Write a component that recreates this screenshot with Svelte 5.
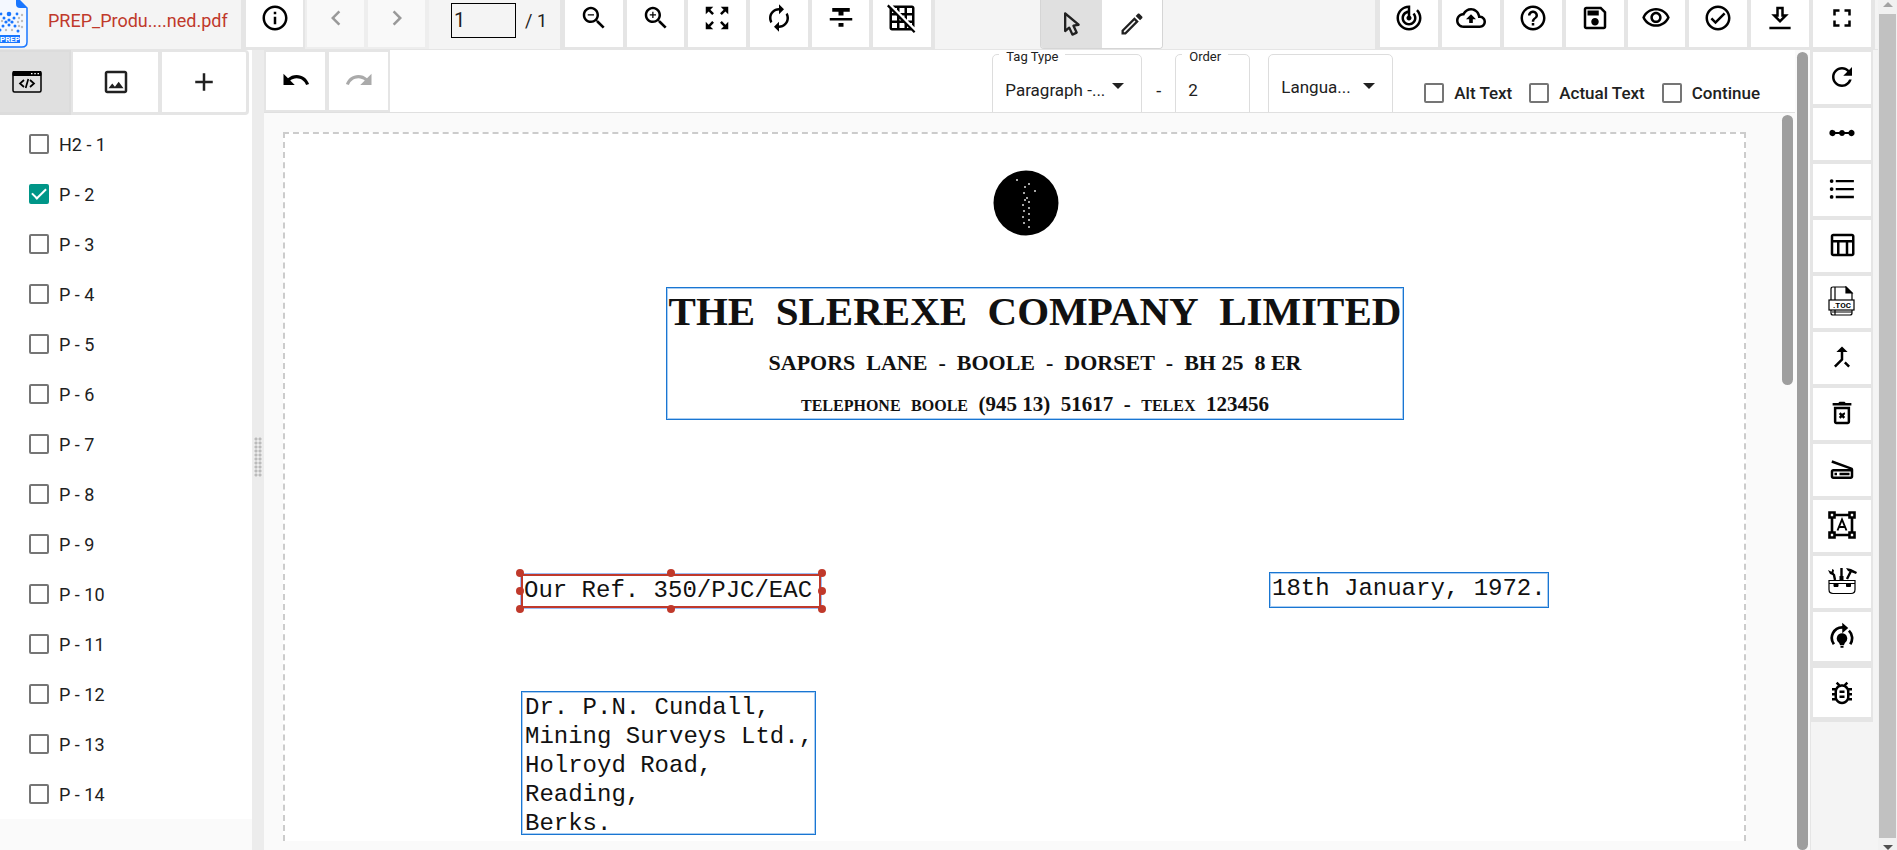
<script lang="ts">
  type Tool = { id: string; label: string; disabled?: boolean };

  const navTools: Tool[] = [
    { id: 'info', label: 'Document info' },
    { id: 'prev', label: 'Previous page', disabled: true },
    { id: 'next', label: 'Next page', disabled: true }
  ];

  const viewTools: Tool[] = [
    { id: 'zoomOut', label: 'Zoom out' },
    { id: 'zoomIn', label: 'Zoom in' },
    { id: 'fit', label: 'Fit to screen' },
    { id: 'sync', label: 'Reload page' },
    { id: 'strike', label: 'Artifact' },
    { id: 'gridOff', label: 'Hide grid' }
  ];

  const fileTools: Tool[] = [
    { id: 'track', label: 'Track changes' },
    { id: 'cloud', label: 'Upload' },
    { id: 'help', label: 'Help' },
    { id: 'save', label: 'Save' },
    { id: 'eye', label: 'Preview' },
    { id: 'check', label: 'Validate' },
    { id: 'download', label: 'Download' },
    { id: 'fullscreen', label: 'Full screen' }
  ];

  const railTools: Tool[] = [
    { id: 'refresh', label: 'Refresh' },
    { id: 'dots', label: 'Reading order' },
    { id: 'list', label: 'List' },
    { id: 'table', label: 'Table' },
    { id: 'toc', label: 'Table of contents' },
    { id: 'merge', label: 'Merge' },
    { id: 'trash', label: 'Delete' },
    { id: 'scanner', label: 'Scan' },
    { id: 'textBox', label: 'Text box' },
    { id: 'toolbox', label: 'Toolbox' },
    { id: 'suggest', label: 'Auto tag' },
    { id: 'bug', label: 'Report a bug' }
  ];

  const paths: Record<string, string> = {
    info: 'M11 7h2v2h-2zm0 4h2v6h-2zm1-9C6.48 2 2 6.48 2 12s4.48 10 10 10 10-4.48 10-10S17.52 2 12 2zm0 18c-4.41 0-8-3.59-8-8s3.59-8 8-8 8 3.59 8 8-3.59 8-8 8z',
    prev: 'M15.41 7.41 14 6l-6 6 6 6 1.41-1.41L10.83 12z',
    next: 'M10 6 8.59 7.41 13.17 12l-4.58 4.59L10 18l6-6z',
    zoomOut: 'M15.5 14h-.79l-.28-.27C15.41 12.59 16 11.11 16 9.5 16 5.91 13.09 3 9.5 3S3 5.91 3 9.5 5.91 16 9.5 16c1.61 0 3.09-.59 4.23-1.57l.27.28v.79l5 4.99L20.49 19l-4.99-5zm-6 0C7.01 14 5 11.99 5 9.5S7.01 5 9.5 5 14 7.01 14 9.5 11.99 14 9.5 14zM7 9h5v1H7z',
    zoomIn: 'M15.5 14h-.79l-.28-.27C15.41 12.59 16 11.11 16 9.5 16 5.91 13.09 3 9.5 3S3 5.91 3 9.5 5.91 16 9.5 16c1.61 0 3.09-.59 4.23-1.57l.27.28v.79l5 4.99L20.49 19l-4.99-5zm-6 0C7.01 14 5 11.99 5 9.5S7.01 5 9.5 5 14 7.01 14 9.5 11.99 14 9.5 14zM12 10h-2v2H9v-2H7V9h2V7h1v2h2v1z',
    fit: 'M15 3l2.3 2.3-2.89 2.87 1.42 1.42L18.7 6.7 21 9V3zM3 9l2.3-2.3 2.87 2.89 1.42-1.42L6.7 5.3 9 3H3zm6 12l-2.3-2.3 2.89-2.87-1.42-1.42L5.3 17.3 3 15v6zm12-6l-2.3 2.3-2.87-2.89-1.42 1.42 2.89 2.87L15 21h6z',
    sync: 'M12 6v3l4-4-4-4v3c-4.42 0-8 3.58-8 8 0 1.57.46 3.03 1.24 4.26L6.7 14.8c-.45-.83-.7-1.79-.7-2.8 0-3.31 2.69-6 6-6zm6.76 1.74L17.3 9.2c.44.84.7 1.79.7 2.8 0 3.31-2.69 6-6 6v-3l-4 4 4 4v-3c4.42 0 8-3.58 8-8 0-1.57-.46-3.03-1.24-4.26z',
    strike: 'M10 19h4v-3h-4v3zM5 4v3h5v3h4V7h5V4H5zM3 14h18v-2H3v2z',
    gridOff: 'M8 4v1.45l2 2V4h4v4h-3.45l2 2H14v1.45l2 2V10h4v4h-3.45l2 2H20v1.45l2 2V4c0-1.1-.9-2-2-2H4.55l2 2H8zm8 0h4v4h-4V4zM1.27 1.27L0 2.55l2 2V20c0 1.1.9 2 2 2h15.46l2 2 1.27-1.27L1.27 1.27zM10 12.55L11.45 14H10v-1.45zm-6-6L5.45 8H4V6.55zM8 20H4v-4h4v4zm0-6H4v-4h3.45l.55.55V14zm6 6h-4v-4h3.45l.55.54V20zm2 0v-1.46L17.46 20H16z',
    cursor: 'M10.07,14.27C10.57,14.03 11.16,14.25 11.4,14.75L13.7,19.74L15.5,18.89L13.19,13.91C12.95,13.41 13.17,12.81 13.67,12.58L13.95,12.5L16.25,12.05L8,5.12V15.9L9.82,14.43L10.07,14.27M13.64,21.97C13.14,22.21 12.54,22 12.31,21.5L10.13,16.76L7.62,18.78C7.45,18.92 7.24,19 7,19A1,1 0 0,1 6,18V3A1,1 0 0,1 7,2C7.24,2 7.47,2.09 7.64,2.23L7.65,2.22L19.14,11.86C19.57,12.22 19.62,12.85 19.27,13.27C19.12,13.45 18.91,13.57 18.7,13.61L15.54,14.23L17.74,18.96C18,19.46 17.76,20.05 17.26,20.28L13.64,21.97Z',
    pencil: 'M14.06,9L15,9.94L5.92,19H5V18.08L14.06,9M17.66,3C17.41,3 17.15,3.1 16.96,3.29L15.13,5.12L18.88,8.87L20.71,7.04C21.1,6.65 21.1,6 20.71,5.63L18.37,3.29C18.17,3.09 17.92,3 17.66,3M14.06,6.19L3,17.25V21H6.75L17.81,9.94L14.06,6.19Z',
    track: 'M19.07 4.93l-1.41 1.41C19.1 7.79 20 9.79 20 12c0 4.42-3.58 8-8 8s-8-3.58-8-8c0-4.08 3.05-7.44 7-7.93v2.02C8.16 6.57 6 9.03 6 12c0 3.31 2.69 6 6 6s6-2.69 6-6c0-1.66-.67-3.16-1.76-4.24l-1.41 1.41C15.55 9.9 16 10.9 16 12c0 2.21-1.79 4-4 4s-4-1.79-4-4c0-1.86 1.28-3.41 3-3.86v2.14c-.6.35-1 .98-1 1.72 0 1.1.9 2 2 2s2-.9 2-2c0-.74-.4-1.38-1-1.72V2h-1C6.48 2 2 6.48 2 12s4.48 10 10 10 10-4.48 10-10c0-2.76-1.12-5.26-2.93-7.07z',
    cloud: 'M19.35 10.04C18.67 6.59 15.64 4 12 4 9.11 4 6.6 5.64 5.35 8.04 2.34 8.36 0 10.91 0 14c0 3.31 2.69 6 6 6h13c2.76 0 5-2.24 5-5 0-2.64-2.05-4.78-4.65-4.96zM19 18H6c-2.21 0-4-1.79-4-4 0-2.05 1.53-3.76 3.56-3.97l1.07-.11.5-.95C8.08 7.14 9.94 6 12 6c2.62 0 4.88 1.86 5.39 4.43l.3 1.5 1.53.11c1.56.1 2.78 1.41 2.78 2.96 0 1.65-1.35 3-3 3zM8 13h2.55v3h2.9v-3H16l-4-4z',
    help: 'M11 18h2v-2h-2v2zm1-16C6.48 2 2 6.48 2 12s4.48 10 10 10 10-4.48 10-10S17.52 2 12 2zm0 18c-4.41 0-8-3.59-8-8s3.59-8 8-8 8 3.59 8 8-3.59 8-8 8zm0-14c-2.21 0-4 1.79-4 4h2c0-1.1.9-2 2-2s2 .9 2 2c0 2-3 1.75-3 5h2c0-2.25 3-2.5 3-5 0-2.21-1.79-4-4-4z',
    save: 'M17 3H5c-1.11 0-2 .9-2 2v14c0 1.1.89 2 2 2h14c1.1 0 2-.9 2-2V7l-4-4zm2 16H5V5h11.17L19 7.83V19zm-7-7c-1.66 0-3 1.34-3 3s1.34 3 3 3 3-1.34 3-3-1.34-3-3-3zM6 6h9v4H6z',
    eye: 'M12 6c3.79 0 7.17 2.13 8.82 5.5C19.17 14.87 15.79 17 12 17s-7.17-2.13-8.82-5.5C4.83 8.13 8.21 6 12 6m0-2C7 4 2.73 7.11 1 11.5 2.73 15.89 7 19 12 19s9.27-3.11 11-7.5C21.27 7.11 17 4 12 4zm0 5c1.38 0 2.5 1.12 2.5 2.5S13.38 14 12 14s-2.5-1.12-2.5-2.5S10.62 9 12 9m0-2c-2.48 0-4.5 2.02-4.5 4.5S9.52 16 12 16s4.5-2.02 4.5-4.5S14.48 7 12 7z',
    check: 'M12 2C6.48 2 2 6.48 2 12s4.48 10 10 10 10-4.48 10-10S17.52 2 12 2zm0 18c-4.41 0-8-3.59-8-8s3.59-8 8-8 8 3.59 8 8-3.59 8-8 8zm4.59-12.42L10 14.17l-2.59-2.58L6 13l4 4 8-8z',
    download: 'M19 9h-4V3H9v6H5l7 7 7-7zm-8 2V5h2v6h1.17L12 13.17 9.83 11H11zm-7.5 8h17v2h-17z',
    fullscreen: 'M7 14H5v5h5v-2H7v-3zm-2-4h2V7h3V5H5v5zm12 7h-3v2h5v-5h-2v3zM14 5v2h3v3h2V5h-5z',
    undo: 'M12.5 8c-2.65 0-5.05.99-6.9 2.6L2 7v9h9l-3.62-3.62c1.39-1.16 3.16-1.88 5.12-1.88 3.54 0 6.55 2.31 7.6 5.5l2.37-.78C21.08 11.03 17.15 8 12.5 8z',
    redo: 'M18.4 10.6C16.55 8.99 14.15 8 11.5 8c-4.65 0-8.58 3.03-9.96 7.22L3.9 16c1.05-3.19 4.05-5.5 7.6-5.5 1.95 0 3.73.72 5.12 1.88L13 16h9V7l-3.6 3.6z',
    image: 'M19 5v14H5V5h14m0-2H5c-1.1 0-2 .9-2 2v14c0 1.1.9 2 2 2h14c1.1 0 2-.9 2-2V5c0-1.1-.9-2-2-2zm-4.86 8.86l-3 3.87L9 13.14 6 17h12l-3.86-5.14z',
    add: 'M19 13h-6v6h-2v-6H5v-2h6V5h2v6h6v2z',
    refresh: 'M17.65 6.35C16.2 4.9 14.21 4 12 4c-4.42 0-7.99 3.58-7.99 8s3.57 8 7.99 8c3.73 0 6.84-2.55 7.73-6h-2.08c-.82 2.33-3.04 4-5.65 4-3.31 0-6-2.69-6-6s2.69-6 6-6c1.66 0 3.14.69 4.22 1.78L13 11h7V4l-2.35 2.35z',
    dots: 'M4.5 9.5a2.5 2.5 0 0 1 2.3 1.7h2.9a2.5 2.5 0 0 1 4.6 0h2.9a2.5 2.5 0 1 1 0 1.6h-2.9a2.5 2.5 0 0 1-4.6 0H6.8a2.5 2.5 0 1 1-2.3-3.3z',
    list: 'M7 4.7h14.5v1.9H7zm0 6.4h14.5v1.9H7zm0 6.3h14.5v1.9H7zM3.7 4.1a1.5 1.5 0 1 1 0 3 1.5 1.5 0 0 1 0-3zm0 6.4a1.5 1.5 0 1 1 0 3 1.5 1.5 0 0 1 0-3zm0 6.3a1.5 1.5 0 1 1 0 3 1.5 1.5 0 0 1 0-3z',
    table: 'M20 3H5c-1.1 0-2 .9-2 2v14c0 1.1.9 2 2 2h15c1.1 0 2-.9 2-2V5c0-1.1-.9-2-2-2zm0 2v3H5V5h15zm-5 14h-5v-9h5v9zM5 10h3v9H5v-9zm12 9v-9h3v9h-3z',
    merge: 'M17 20.41L18.41 19 15 15.59 13.59 17 17 20.41zM7.5 8H11v5.59L5.59 19 7 20.41l6-6V8h3.5L12 3.5 7.5 8z',
    trash: 'M14.12 11.47L12 12.59l-1.13-1.12-1.41 1.41L10.59 14l-1.12 1.12 1.41 1.41L12 15.41l1.12 1.12 1.41-1.41L13.41 14l1.12-1.12zM15 4l-1-1h-4l-1 1H4.5v2h15V4zM5.500 19c0 1.1.9 2 2 2h9c1.1 0 2-.9 2-2V7h-13v12zM7.500 9h9v10h-9V9z',
    scanner: 'M19.8 10.7L4.2 5l-.7 1.9L17.6 12H5c-1.1 0-2 .9-2 2v4c0 1.1.9 2 2 2h14c1.1 0 2-.9 2-2v-5.5c0-.8-.5-1.6-1.2-1.8zM19 18H5v-4h14v4zM6 15h2v2H6zm4 0h8v2h-8z',
    suggest: 'M12 9a4.2 4.2 0 0 1 2.3 7.7l-.8 1.8h-3l-.8-1.8A4.2 4.2 0 0 1 12 9zm-1.2 10.2h2.400v1.4h-2.400zM4.6 18.3A9.5 9.5 0 0 1 12.2 3.200V.6L17 4.8l-4.8 4.100V5.300A7.400 7.400 0 0 0 6.400 17.100zM18.300 6.100a9.500 9.500 0 0 1 1.200 12.200l-1.800-1.200a7.400 7.400 0 0 0-.9-9.500z',
    bug: 'M20 8h-2.81c-.45-.78-1.07-1.45-1.82-1.96L17 4.41 15.59 3l-2.17 2.17C12.96 5.06 12.49 5 12 5s-.96.06-1.41.17L8.41 3 7 4.41l1.62 1.63C7.88 6.55 7.26 7.22 6.81 8H4v2h2.09c-.05.33-.09.66-.09 1v1H4v2h2v1c0 .34.04.67.09 1H4v2h2.81c1.04 1.79 2.97 3 5.19 3s4.15-1.21 5.19-3H20v-2h-2.09c.05-.33.09-.66.09-1v-1h2v-2h-2v-1c0-.34-.04-.67-.09-1H20V8zm-4 4v3c0 .22-.03.47-.07.7l-.1.65-.37.65c-.72 1.24-2.04 2-3.46 2s-2.74-.77-3.46-2l-.37-.64-.1-.65C8.03 15.48 8 15.23 8 15v-4c0-.23.03-.48.07-.7l.1-.65.37-.65c.3-.52.72-.97 1.21-1.31l.57-.39.74-.18c.31-.08.63-.12.94-.12.32 0 .63.04.95.12l.68.16.61.42c.5.34.91.78 1.21 1.31l.38.65.1.65c.04.22.07.47.07.69v1zm-6 2h4v2h-4zm0-4h4v2h-4z'
  };

  // white specks on the letterhead seal
  const specks = [
    [24, 10], [36, 14], [32, 17], [42, 21], [31, 23], [34, 28], [32, 30], [36, 32],
    [30, 35], [36, 38], [31, 41], [36, 44], [30, 47], [36, 50], [31, 53], [36, 57]
  ];

  // blue and grey dots of the logo, as [x, y, r]
  const blueDots = [
    [9, 14, 2.3], [1, 14, 1.4], [17, 14, 1.4], [4, 18, 1.5], [14, 18, 1.5], [9, 20, 1.6], [6, 22, 1.6],
    [12, 22, 1.6], [9, 25, 1.5], [3, 26, 1.5], [15, 26, 1.5], [0, 30, 1.5], [18, 31, 1.5]
  ];
  const greyDots = [
    [22, 15, 1.2], [19, 18, 1.2], [22, 21, 1.2], [18, 22, 1.2], [22, 27, 1.2],
    [19, 26, 1.2], [2, 21, 1.2], [6, 30, 1.2], [12, 30, 1.2]
  ];

  const handles = [
    [0, 0], [50, 0], [100, 0],
    [0, 50], [100, 50],
    [0, 100], [50, 100], [100, 100]
  ];

  let tags = $state(
    Array.from({ length: 14 }, (_, i) => ({
      label: i === 0 ? 'H2 - 1' : `P - ${i + 1}`,
      checked: i === 1
    }))
  );

  const flags = ['Alt Text', 'Actual Text', 'Continue'];
</script>

{#snippet icon(id: string)}
  {#if id === 'code'}
    <svg class="icon" viewBox="0 0 30 30" fill="none" stroke="currentColor" aria-hidden="true">
      <rect x="1" y="5" width="28" height="20" rx="1.5" stroke-width="1.5" />
      <path d="M1 4.500h28v4H1z" fill="currentColor" />
      <path d="M19 6.700h1.500M22.300 6.700h1.500M25.500 6.700H27" stroke="#fff" stroke-width="1.300" />
      <path d="m12 13-4 3.500 4 3.500M18 13l4 3.500-4 3.500M16.300 12l-2.600 9" stroke-width="1.700" />
    </svg>
  {:else if id === 'toc'}
    <svg class="icon" viewBox="0 0 30 30" fill="none" stroke="currentColor" stroke-width="1.200" aria-hidden="true">
      <path d="M4 14V3q0-2 2-2h13l6 6v7M8 1v13M4 24v3q0 2 2 2h17q2 0 2-2v-3M8 24v5M5 26h20" />
      <path d="M19 1v6h6z" fill="currentColor" />
      <rect x="2" y="14" width="25" height="10" fill="#fff" />
      <text x="15" y="22" text-anchor="middle" class="toc-text">.TOC</text>
    </svg>
  {:else if id === 'textBox'}
    <svg class="icon" viewBox="0 0 30 30" fill="none" stroke="currentColor" stroke-width="2.600" aria-hidden="true">
      <path d="M8 5h14M8 25h14M5 8v14M25 8v14" />
      <path d="M2.500 2.500h5v5h-5zM22.500 2.500h5v5h-5zM2.500 22.500h5v5h-5zM22.500 22.500h5v5h-5z" />
      <path d="m10.500 20.500 4.500-11 4.500 11M12 17h6" stroke-width="1.900" />
    </svg>
  {:else if id === 'toolbox'}
    <svg class="icon" viewBox="0 0 30 30" fill="none" stroke="currentColor" aria-hidden="true">
      <path d="M2 14.500h26v9q0 4-4 4H6q-4 0-4-4zM2 17.500h26" stroke-width="1.200" />
      <path d="M7 18h4v2.500H7zM19.500 18h4v2.500h-4z" fill="currentColor" />
      <path d="m4 6 3 3 1 5M14.500 2v3M14.500 5v7M20 13l4-8" stroke-width="2.400" />
      <path d="M12.500 10h4v4h-4zM1 4l2 4 3 1 1-5-2-1v3zM19 2l5 1 6 3-1 2-8-3z" fill="currentColor" stroke="none" />
    </svg>
  {:else}
    <svg class="icon" viewBox="0 0 24 24" fill="currentColor" aria-hidden="true">
      <path d={paths[id]} />
    </svg>
  {/if}
{/snippet}

{#snippet toolButtons(tools: Tool[])}
  {#each tools as tool (tool.id)}
    <button class="tool" type="button" aria-label={tool.label} disabled={tool.disabled}>
      {@render icon(tool.id)}
    </button>
  {/each}
{/snippet}

<div class="window">
  <div class="app">
    <header>
      <div class="brand">
        <svg class="logo" viewBox="0 0 28 48" aria-hidden="true">
          <path d="M-6-3h22l11 11v34q0 5-5 5H-6z" fill="#f4f8ff" stroke="#1976ff" stroke-width="1.500" />
          <path d="M16-3v7q0 4 4 4h7z" fill="#1976ff" />
          {#each greyDots as [x, y, r]}
            <circle cx={x} cy={y} {r} fill="#bdbdbd" />
          {/each}
          {#each blueDots as [x, y, r]}
            <circle cx={x} cy={y} {r} fill="#1976ff" />
          {/each}
          <rect x="-3" y="35" width="23" height="8" fill="#1976ff" />
          <text x="0" y="42" class="logo-text">PREP</text>
        </svg>
        <span class="file-name">PREP_Produ....ned.pdf</span>
      </div>

      <div class="group nav">{@render toolButtons(navTools)}</div>

      <div class="pager">
        <input type="text" value="1" aria-label="Page number" />
        <span>/ 1</span>
      </div>

      <div class="group view">{@render toolButtons(viewTools)}</div>

      <div class="modes">
        <button class="active" type="button" aria-label="Select">{@render icon('cursor')}</button>
        <button type="button" aria-label="Draw">{@render icon('pencil')}</button>
      </div>

      <div class="group files">{@render toolButtons(fileTools)}</div>
    </header>

    <div class="body">
      <aside class="sidebar">
        <div class="tabs">
          <button class="active" type="button" aria-label="Tags">{@render icon('code')}</button>
          <button type="button" aria-label="Images">{@render icon('image')}</button>
          <button type="button" aria-label="Add">{@render icon('add')}</button>
        </div>
        <ul class="tags">
          {#each tags as tag (tag.label)}
            <li>
              <label class="check">
                <input type="checkbox" bind:checked={tag.checked} />
                {tag.label}
              </label>
            </li>
          {/each}
        </ul>
      </aside>

      <div class="splitter"><span class="grip"></span></div>

      <main>
        <div class="editor">
          <div class="edit-bar">
            <div class="history">
              <button type="button" aria-label="Undo">{@render icon('undo')}</button>
              <button type="button" aria-label="Redo" disabled>{@render icon('redo')}</button>
            </div>

            <div class="fields">
              <div class="field tag-type">
                <label for="tag-type">Tag Type</label>
                <select id="tag-type">
                  <option>Paragraph -...</option>
                </select>
              </div>
              <span class="dash">-</span>
              <div class="field order">
                <label for="order">Order</label>
                <input id="order" type="text" value="2" />
              </div>
              <div class="field language">
                <select aria-label="Language">
                  <option>Langua...</option>
                </select>
              </div>
            </div>

            <div class="flags">
              {#each flags as flag}
                <label class="check">
                  <input type="checkbox" />
                  {flag}
                </label>
              {/each}
            </div>
          </div>

          <div class="stage">
            <div class="sheet">
              <svg class="seal" viewBox="0 0 66 66" aria-hidden="true">
                <circle cx="33" cy="33" r="32.500" />
                {#each specks as [x, y]}
                  <circle cx={x} cy={y} r="1" fill="#ddd" />
                {/each}
              </svg>

              <div class="zone letterhead">
                <h1>THE&nbsp; SLEREXE&nbsp; COMPANY&nbsp; LIMITED</h1>
                <p class="street">SAPORS&nbsp; LANE&nbsp; -&nbsp; BOOLE&nbsp; -&nbsp; DORSET&nbsp; -&nbsp; BH 25&nbsp; 8 ER</p>
                <p class="phone"><small>TELEPHONE</small>&nbsp; <small>BOOLE</small>&nbsp; (945 13)&nbsp; 51617&nbsp; -&nbsp; <small>TELEX</small>&nbsp; 123456</p>
              </div>

              <div class="zone typed reference">
                Our Ref. 350/PJC/EAC
                <div class="handles">
                  {#each handles as [x, y]}
                    <i style="left: {x}%; top: {y}%"></i>
                  {/each}
                </div>
              </div>

              <div class="zone typed date">18th January, 1972.</div>

              <address class="zone typed">
                Dr. P.N. Cundall,<br />
                Mining Surveys Ltd.,<br />
                Holroyd Road,<br />
                Reading,<br />
                Berks.
              </address>
            </div>
            <div class="stage-scroll"></div>
          </div>
        </div>
        <div class="main-scroll"></div>
      </main>

      <nav class="rail" aria-label="Document tools">{@render toolButtons(railTools)}</nav>
    </div>
  </div>

  <div class="window-scroll">
    <span class="up"></span>
    <span class="thumb"></span>
    <span class="down"></span>
  </div>
</div>

<style>
  :global(body) {
    margin: 0;
    background: #f4f4f4;
  }
  .window {
    display: flex;
    height: 100vh;
    overflow: hidden;
    font-family: Roboto, 'Liberation Sans', sans-serif;
    font-size: 18px;
    color: #212121;
  }
  .window * {
    box-sizing: border-box;
  }
  .app {
    flex: 1;
    min-width: 0;
    display: flex;
    flex-direction: column;
  }
  button {
    display: flex;
    align-items: center;
    justify-content: center;
    margin: 0;
    padding: 0;
    border: 0;
    background: #fff;
    color: #000;
  }
  .icon {
    display: block;
    width: 30px;
    height: 30px;
  }
  .toc-text {
    font: 700 8px Roboto, sans-serif;
    fill: currentColor;
    stroke: none;
  }

  /* top toolbar */
  header {
    display: flex;
    flex: none;
    height: 50px;
    padding-right: 3px;
    border-bottom: 1px solid #e5e5e5;
    background: #f4f4f4;
  }
  .brand {
    display: flex;
    width: 241px;
  }
  .logo {
    width: 28px;
    height: 48px;
  }
  .logo-text {
    font: 700 8px Roboto, sans-serif;
    fill: #fff;
  }
  .file-name {
    margin-left: 20px;
    line-height: 42px;
    color: #c0392b;
    white-space: nowrap;
  }
  .group {
    display: flex;
    padding: 0 2px 0 3px;
    background: #e5e5e5;
  }
  .group .tool {
    flex: 1;
    padding-bottom: 11px;
    border: solid #e5e5e5;
    border-width: 0 2px 2px;
  }
  .group .tool:disabled {
    background: #f9f9f9;
    color: #999;
    border-color: #eee;
  }
  .nav {
    width: 188px;
    background: linear-gradient(90deg, #e5e5e5 60px, #eee 60px);
  }
  .pager {
    display: flex;
    gap: 9px;
    width: 131px;
    padding: 3px 0 0 22px;
    line-height: 35px;
  }
  .pager input {
    width: 65px;
    height: 35px;
    padding: 0 2px;
    border: 1px solid #000;
    background: transparent;
    font: inherit;
    font-size: 20px;
    color: inherit;
  }
  .view {
    width: 375px;
  }
  .modes {
    display: flex;
    width: 123px;
    margin-left: auto;
    border: solid #d5d5d5;
    border-width: 0 1px 1px;
    border-radius: 0 0 4px 4px;
    overflow: hidden;
  }
  .modes button {
    flex: 1;
    color: #212121;
  }
  .modes .icon {
    width: 28px;
    height: 28px;
  }
  button.active {
    background: #e0e0e0;
  }
  .files {
    width: 500px;
    margin-left: 212px;
  }

  .body {
    flex: 1;
    display: flex;
    min-height: 0;
  }

  /* tag list */
  .sidebar {
    width: 252px;
    background: #fafafa;
  }
  .tabs {
    display: grid;
    grid-template-columns: 71px 89px 89px;
    height: 65px;
    background: #fff;
  }
  .tabs button {
    border: solid #e5e5e5;
    border-width: 2px 2px 3px;
    color: #212121;
  }
  .tabs button:first-child {
    padding-right: 15px;
    border-left: 0;
    border-color: #dcdcdc;
    color: #000;
  }
  .tabs button:last-child {
    border-right-width: 3px;
    border-radius: 0 4px 4px 0;
  }
  .tags {
    margin: 0;
    padding: 4px 0 0;
    list-style: none;
    background: #fff;
  }
  .tags li {
    display: flex;
    height: 50px;
    padding-left: 29px;
  }
  .check {
    display: flex;
    align-items: center;
    gap: 10px;
    white-space: nowrap;
  }
  .check input {
    appearance: none;
    display: grid;
    place-items: center;
    flex: none;
    width: 20px;
    height: 20px;
    margin: 0;
    border: 2px solid #757575;
    border-radius: 2px;
    background: #fff;
  }
  .check input:checked {
    border-color: #009688;
    background: #009688;
  }
  .check input:checked::after {
    content: '';
    width: 6px;
    height: 12px;
    margin-top: -4px;
    border: solid #fff;
    border-width: 0 2px 2px 0;
    transform: rotate(45deg);
  }
  .splitter {
    display: grid;
    place-items: center;
    width: 12px;
    background: #ececec;
  }
  .grip {
    width: 8px;
    height: 40px;
    margin-top: 14px;
    background: radial-gradient(circle, #bbb 1px, transparent 2px) 0 0 / 4px 4px;
  }

  /* editor */
  main {
    flex: 1;
    display: flex;
    min-width: 0;
    background: #fafafa;
  }
  .editor {
    flex: 1;
    display: flex;
    flex-direction: column;
    min-width: 0;
  }
  .edit-bar {
    display: flex;
    flex: none;
    height: 63px;
    padding-right: 35px;
    border-bottom: 1px solid #e0e0e0;
    background: #fff;
    overflow: hidden;
  }
  .history {
    display: flex;
  }
  .history button {
    width: 63px;
    padding-bottom: 3px;
    border: 2px solid #e5e5e5;
  }
  .history button:disabled {
    color: #aaa;
  }
  .fields {
    display: flex;
    align-items: flex-start;
    margin-left: auto;
    padding-top: 4px;
  }
  .field {
    position: relative;
    height: 72px;
    border: 1px solid #ddd;
    border-radius: 5px;
  }
  .field label {
    position: absolute;
    top: -6px;
    left: 6px;
    padding: 0 7px;
    background: #fff;
    font-size: 13px;
    line-height: 16px;
  }
  .field input,
  .field select {
    appearance: none;
    width: 100%;
    height: 100%;
    padding: 0 12px;
    border: 0;
    background: transparent;
    font: inherit;
    font-size: 17px;
    color: inherit;
  }
  .field:has(select)::after {
    content: '';
    position: absolute;
    top: 28px;
    right: 17px;
    border: 6px solid transparent;
    border-top-color: #212121;
    border-bottom: 0;
  }
  .tag-type {
    width: 150px;
  }
  .dash {
    width: 33px;
    line-height: 74px;
    text-align: center;
  }
  .order {
    width: 75px;
  }
  .language {
    width: 125px;
    margin-left: 18px;
  }
  .language select {
    height: 64px;
  }
  .flags {
    display: flex;
    gap: 17px;
    margin-left: 31px;
    padding-top: 24px;
    font-size: 17px;
    font-weight: 500;
  }

  .stage {
    flex: 1;
    display: flex;
    min-height: 0;
    padding: 19px 2px 9px 19px;
  }
  .sheet {
    position: relative;
    flex: 1;
    border: 2px dashed #ccc;
    border-bottom: 0;
    background: #fff;
    color: #111;
  }
  .seal {
    position: absolute;
    top: 36px;
    left: 708px;
    width: 66px;
    height: 66px;
  }
  .zone {
    position: absolute;
    border: 1px solid #1976d2;
    box-shadow: inset 0 0 0 1px #a9cdf2;
    white-space: nowrap;
  }
  .letterhead {
    top: 153px;
    left: 381px;
    width: 738px;
    height: 133px;
    font-family: 'Liberation Serif', serif;
    font-weight: 700;
    text-align: center;
  }
  .letterhead h1,
  .letterhead p {
    margin: 0;
  }
  .letterhead h1 {
    font-size: 41px;
    line-height: 46px;
  }
  .letterhead .street {
    font-size: 22px;
    line-height: 58px;
  }
  .letterhead .phone {
    font-size: 21px;
    line-height: 24px;
  }
  .phone small {
    font-size: 16px;
  }
  .typed {
    padding: 1px 3px;
    font: 24px/29px 'Liberation Mono', monospace;
  }
  .reference {
    top: 440px;
    left: 236px;
    width: 300px;
    height: 34px;
    padding: 0 1px;
    border: 2px solid #c0392b;
    box-shadow: 0 0 0 1px #9dbdf5;
  }
  .handles {
    position: absolute;
    inset: -3px;
  }
  .handles i {
    position: absolute;
    width: 8px;
    height: 8px;
    border-radius: 50%;
    background: #c0392b;
    transform: translate(-50%, -50%);
  }
  .date {
    top: 438px;
    left: 984px;
    width: 280px;
    height: 36px;
    padding: 1px 2px;
  }
  address {
    top: 557px;
    left: 236px;
    width: 295px;
    height: 144px;
  }
  .stage-scroll {
    width: 11px;
    height: 270px;
    margin: -17px 0 0 36px;
    border-radius: 6px;
    background: #9e9e9e;
  }
  .main-scroll {
    width: 11px;
    margin: 2px 2px 0;
    border-radius: 6px;
    background: #9e9e9e;
  }

  /* right rail */
  .rail {
    width: 68px;
    padding-right: 5px;
    background: #f4f4f4;
    border-left: 1px solid #e5e5e5;
  }
  .rail .tool {
    width: 100%;
    height: 56px;
    padding-bottom: 3px;
    border: 2px solid #e5e5e5;
  }
  .rail .tool:nth-last-child(-n + 2) {
    padding-bottom: 0;
    border-bottom-width: 5px;
  }

  .window-scroll {
    display: flex;
    flex-direction: column;
    align-items: center;
    gap: 7px;
    width: 19px;
    padding-top: 2px;
    background: #f1f1f1;
  }
  .window-scroll .thumb {
    flex: 1;
    width: 17px;
    background: #c1c1c1;
  }
  .up,
  .down {
    border: 5px solid transparent;
  }
  .up {
    border-top: 0;
    border-bottom-color: #a3a3a3;
  }
  .down {
    height: 4px;
    border-bottom: 0;
    border-top-color: #505050;
  }
</style>
